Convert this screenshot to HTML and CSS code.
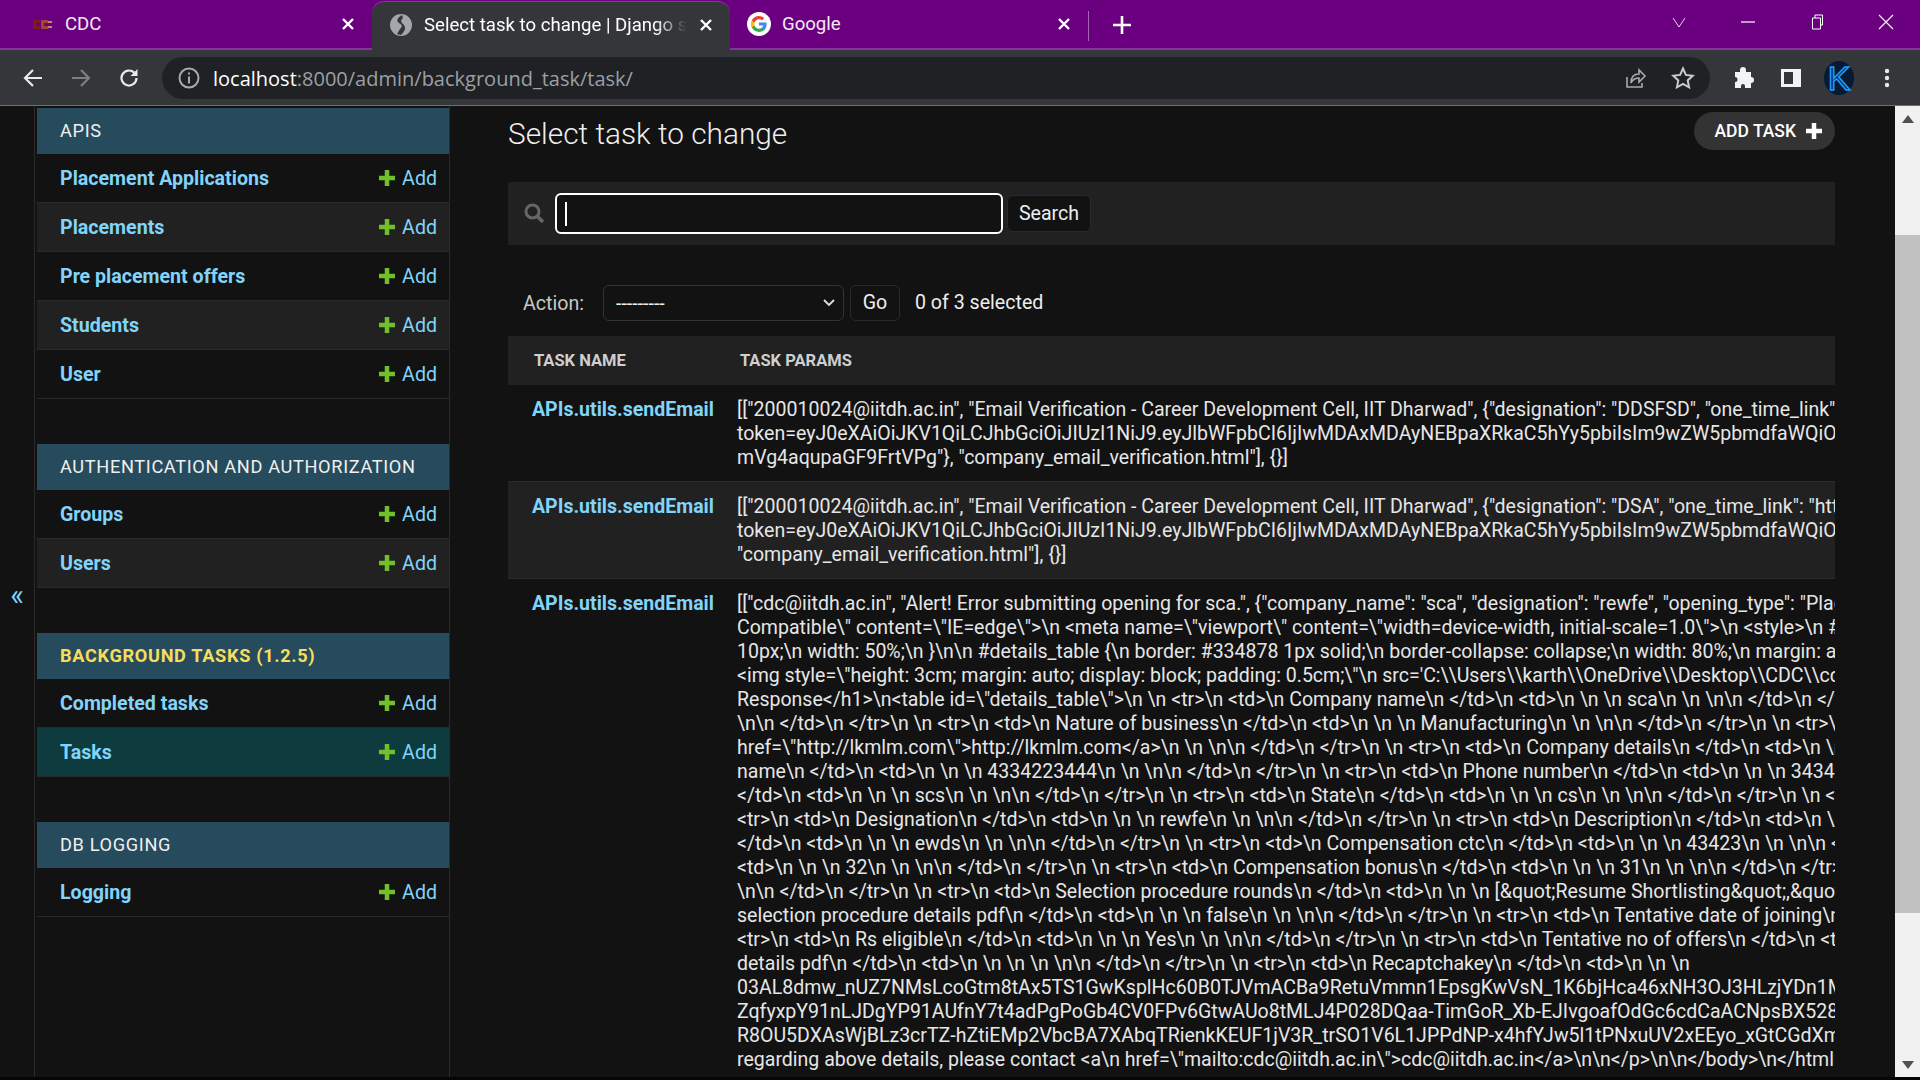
FILE: index.html
```html
<!DOCTYPE html>
<html>
	<head>
		<title>Select task to change | Django site admin</title>
		<meta charset="utf-8">
		<link rel="stylesheet" href="styles.css">
	</head>
	<body>
		<div class="tabstrip">
			<div class="tab tab-first">
				<svg class="fav" viewBox="0 0 24 24"><path d="M3 8h7v3H6v3h4v3H3z" fill="#7d1d14"/><path d="M11 8h7v3h-4v3h4v3h-7z" fill="#a5452f"/><path d="M18 9h4v2h-4zM18 14h4v2h-4z" fill="#c08a5a"/></svg>
				<span class="tab-title">CDC</span>
				<svg class="tab-close" viewBox="0 0 16 16"><path d="M3 3l10 10M13 3L3 13" stroke="#fff" stroke-width="2.4"/></svg>
			</div>
			<div class="tab tab-active">
				<svg class="fav" viewBox="0 0 24 24"><circle cx="12" cy="12" r="11" fill="#a3a6aa"/><path d="M13 2c-5 3-6 6-3 8s4 3 1 6l-3 5 4 1c4-4 5-7 3-10-3-3-4-4-1-7z" fill="#35363a"/></svg>
				<span class="tab-title tab-fade">Select task to change | Django site admin</span>
				<svg class="tab-close" viewBox="0 0 16 16"><path d="M3 3l10 10M13 3L3 13" stroke="#fff" stroke-width="2.4"/></svg>
			</div>
			<div class="tab">
				<svg class="fav" viewBox="0 0 24 24"><circle cx="12" cy="12" r="12" fill="#fff"/><path d="M19.6 12.2c0-.6 0-1.100-.2-1.600H12v3h4.300c-.2 1-.8 1.800-1.600 2.400v2h2.600c1.500-1.400 2.300-3.400 2.300-5.800z" fill="#4285f4"/><path d="M12 20c2.200 0 4-.7 5.300-2l-2.600-2c-.7.500-1.600.8-2.700.8-2.100 0-3.900-1.400-4.500-3.300H4.800v2.100C6.100 18.200 8.900 20 12 20z" fill="#34a853"/><path d="M7.500 13.500c-.3-1-.3-2 0-3V8.400H4.800c-1.100 2.200-1.100 5 0 7.200z" fill="#fbbc05"/><path d="M12 7.200c1.200 0 2.200.4 3 1.200l2.300-2.300C15.900 4.800 14.100 4 12 4 8.900 4 6.100 5.800 4.800 8.400l2.700 2.100c.6-1.900 2.400-3.300 4.500-3.300z" fill="#ea4335"/></svg>
				<span class="tab-title">Google</span>
				<svg class="tab-close" viewBox="0 0 16 16"><path d="M3 3l10 10M13 3L3 13" stroke="#fff" stroke-width="2.4"/></svg>
			</div>
			<div class="tab-sep"></div>
			<svg class="new-tab" viewBox="0 0 18 18"><path d="M9 0v18M0 9h18" stroke="#fff" stroke-width="2.600"/></svg>
			<div class="win-controls">
				<div class="win-btn"><svg viewBox="0 0 16 16"><path d="M2 4l6 9 6-9" stroke="#e5d3ea" fill="none"/></svg></div>
				<div class="win-btn"><svg viewBox="0 0 16 16"><path d="M1 8h14" stroke="#fff" stroke-width="1.200"/></svg></div>
				<div class="win-btn"><svg viewBox="0 0 16 16"><path d="M3.500 4h8v11h-8zM6 4V1h7.500v10h-2" stroke="#fff" fill="none"/></svg></div>
				<div class="win-btn"><svg viewBox="0 0 16 16"><path d="M1 1l14 14M15 1L1 15" stroke="#fff" stroke-width="1.100"/></svg></div>
			</div>
		</div>

		<div class="toolbar">
			<div class="tool-btn"><svg viewBox="0 0 24 24"><path d="M21 12H5M12 4l-8 8 8 8" stroke="#e8eaed" stroke-width="2.200" fill="none"/></svg></div>
			<div class="tool-btn"><svg viewBox="0 0 24 24"><path d="M3 12h16M12 4l8 8-8 8" stroke="#7c7f83" stroke-width="2.200" fill="none"/></svg></div>
			<div class="tool-btn"><svg viewBox="0 0 24 24"><path d="M19.500 12a7.500 7.500 0 1 1-2.300-5.400" stroke="#e8eaed" stroke-width="2.200" fill="none"/><path d="M20.500 3v7h-7z" fill="#e8eaed"/></svg></div>
			<div class="omnibox">
				<svg class="omni-icon" viewBox="0 0 24 24"><circle cx="12" cy="12" r="9.500" stroke="#a9abae" stroke-width="2" fill="none"/><path d="M12 10.500v7M12 6.500v2" stroke="#a9abae" stroke-width="2"/></svg>
				<div class="url"><span class="url-host">localhost</span>:8000/admin/background_task/task/</div>
				<svg class="omni-icon" viewBox="0 0 24 24"><path d="M4 11v10h15v-4" stroke="#a9abae" stroke-width="1.600" fill="none"/><path d="M8 17c0-6 3-9 8-9V4l6 6-6 6v-4c-4 0-6 1-8 5z" stroke="#a9abae" stroke-width="1.600" fill="none"/></svg>
				<svg class="omni-icon" viewBox="0 0 24 24"><path d="M12 2.500l2.900 6.400 6.900.8-5.100 4.700 1.400 6.900-6.100-3.500-6.100 3.500 1.400-6.900-5.100-4.700 6.900-.8z" stroke="#c8cacd" stroke-width="2" fill="none"/></svg>
			</div>
			<div class="tool-btn"><svg viewBox="0 0 24 24"><path d="M9 4a3 3 0 0 1 6 0v2h5v5a3 3 0 0 1 0 6v5h-6v-2a2 2 0 0 0-4 0v2H4v-6a2.500 2.500 0 0 0 0-5V6h5z" fill="#f1f3f4"/></svg></div>
			<div class="tool-btn"><svg viewBox="0 0 24 24"><path d="M2 3h20v18H2zM5 6v12h9V6z" fill="#f1f3f4" fill-rule="evenodd"/></svg></div>
			<div class="tool-btn"><span class="avatar">K</span></div>
			<div class="tool-btn"><svg viewBox="0 0 24 24"><circle cx="12" cy="5" r="2.200" fill="#e8eaed"/><circle cx="12" cy="12" r="2.200" fill="#e8eaed"/><circle cx="12" cy="19" r="2.200" fill="#e8eaed"/></svg></div>
		</div>

		<div class="page">
			<div class="nav-toggle">«</div>
			<div class="sidebar">
				<div class="module">
					<div class="caption">APIS</div>
					<div class="nav-row"><a class="model-link">Placement Applications</a><a class="add-link"><svg class="plus" viewBox="0 0 16 16"><path d="M8 0v16M0 8h16" stroke="#70bf2b" stroke-width="4.500"/></svg>Add</a></div>
					<div class="nav-row alt"><a class="model-link">Placements</a><a class="add-link"><svg class="plus" viewBox="0 0 16 16"><path d="M8 0v16M0 8h16" stroke="#70bf2b" stroke-width="4.500"/></svg>Add</a></div>
					<div class="nav-row"><a class="model-link">Pre placement offers</a><a class="add-link"><svg class="plus" viewBox="0 0 16 16"><path d="M8 0v16M0 8h16" stroke="#70bf2b" stroke-width="4.500"/></svg>Add</a></div>
					<div class="nav-row alt"><a class="model-link">Students</a><a class="add-link"><svg class="plus" viewBox="0 0 16 16"><path d="M8 0v16M0 8h16" stroke="#70bf2b" stroke-width="4.500"/></svg>Add</a></div>
					<div class="nav-row"><a class="model-link">User</a><a class="add-link"><svg class="plus" viewBox="0 0 16 16"><path d="M8 0v16M0 8h16" stroke="#70bf2b" stroke-width="4.500"/></svg>Add</a></div>
				</div>
				<div class="module">
					<div class="caption">AUTHENTICATION AND AUTHORIZATION</div>
					<div class="nav-row"><a class="model-link">Groups</a><a class="add-link"><svg class="plus" viewBox="0 0 16 16"><path d="M8 0v16M0 8h16" stroke="#70bf2b" stroke-width="4.500"/></svg>Add</a></div>
					<div class="nav-row alt"><a class="model-link">Users</a><a class="add-link"><svg class="plus" viewBox="0 0 16 16"><path d="M8 0v16M0 8h16" stroke="#70bf2b" stroke-width="4.500"/></svg>Add</a></div>
				</div>
				<div class="module">
					<div class="caption caption-current">BACKGROUND TASKS (1.2.5)</div>
					<div class="nav-row"><a class="model-link">Completed tasks</a><a class="add-link"><svg class="plus" viewBox="0 0 16 16"><path d="M8 0v16M0 8h16" stroke="#70bf2b" stroke-width="4.500"/></svg>Add</a></div>
					<div class="nav-row current"><a class="model-link">Tasks</a><a class="add-link"><svg class="plus" viewBox="0 0 16 16"><path d="M8 0v16M0 8h16" stroke="#70bf2b" stroke-width="4.500"/></svg>Add</a></div>
				</div>
				<div class="module">
					<div class="caption">DB LOGGING</div>
					<div class="nav-row"><a class="model-link">Logging</a><a class="add-link"><svg class="plus" viewBox="0 0 16 16"><path d="M8 0v16M0 8h16" stroke="#70bf2b" stroke-width="4.500"/></svg>Add</a></div>
				</div>
			</div>

			<div class="content">
				<div class="content-head">
					<h1 class="page-title">Select task to change</h1>
					<a class="add-task">ADD TASK<svg viewBox="0 0 16 16"><path d="M8 0v16M0 8h16" stroke="#fff" stroke-width="4.500"/></svg></a>
				</div>
				<div class="search-bar">
					<svg class="search-icon" viewBox="0 0 21 21"><circle cx="8.500" cy="8.500" r="6.500" stroke="#666" stroke-width="3" fill="none"/><path d="M13 13l6 6" stroke="#666" stroke-width="3.500"/></svg>
					<div class="search-input"><span class="caret"></span></div>
					<div class="btn btn-search">Search</div>
				</div>
				<div class="actions">
					<span class="action-label">Action:</span>
					<div class="action-select">---------<svg viewBox="0 0 12 8"><path d="M1 1l5 5 5-5" stroke="#e0e0e0" stroke-width="1.800" fill="none"/></svg></div>
					<div class="btn btn-go">Go</div>
					<span class="action-count">0 of 3 selected</span>
				</div>
				<table class="results">
					<thead>
						<tr><th class="col-name">TASK NAME</th><th>TASK PARAMS</th></tr>
					</thead>
					<tbody>
						<tr>
							<td><a class="task-link">APIs.utils.sendEmail</a></td>
							<td>[["200010024@iitdh.ac.in", "Email Verification - Career Development Cell, IIT Dharwad", {"designation": "DDSFSD", "one_time_link": "http://<br>token=eyJ0eXAiOiJKV1QiLCJhbGciOiJIUzI1NiJ9.eyJlbWFpbCI6IjIwMDAxMDAyNEBpaXRkaC5hYy5pbiIsIm9wZW5pbmdfaWQiOiJ<br>mVg4aqupaGF9FrtVPg"}, "company_email_verification.html"], {}]</td>
						</tr>
						<tr class="alt">
							<td><a class="task-link">APIs.utils.sendEmail</a></td>
							<td>[["200010024@iitdh.ac.in", "Email Verification - Career Development Cell, IIT Dharwad", {"designation": "DSA", "one_time_link": "http://localhost<br>token=eyJ0eXAiOiJKV1QiLCJhbGciOiJIUzI1NiJ9.eyJlbWFpbCI6IjIwMDAxMDAyNEBpaXRkaC5hYy5pbiIsIm9wZW5pbmdfaWQiOiJ<br>"company_email_verification.html"], {}]</td>
						</tr>
						<tr>
							<td><a class="task-link">APIs.utils.sendEmail</a></td>
							<td>[["cdc@iitdh.ac.in", "Alert! Error submitting opening for sca.", {"company_name": "sca", "designation": "rewfe", "opening_type": "Placement", "x<br>Compatible\" content=\"IE=edge\"&gt;\n &lt;meta name=\"viewport\" content=\"width=device-width, initial-scale=1.0\"&gt;\n &lt;style&gt;\n #main {\n<br>10px;\n width: 50%;\n }\n\n #details_table {\n border: #334878 1px solid;\n border-collapse: collapse;\n width: 80%;\n margin: auto;\n<br>&lt;img style=\"height: 3cm; margin: auto; display: block; padding: 0.5cm;\"\n src='C:\\Users\\karth\\OneDrive\\Desktop\\CDC\\cdc<br>Response&lt;/h1&gt;\n&lt;table id=\"details_table\"&gt;\n \n &lt;tr&gt;\n &lt;td&gt;\n Company name\n &lt;/td&gt;\n &lt;td&gt;\n \n \n sca\n \n \n\n &lt;/td&gt;\n &lt;/tr&gt;<br>\n\n &lt;/td&gt;\n &lt;/tr&gt;\n \n &lt;tr&gt;\n &lt;td&gt;\n Nature of business\n &lt;/td&gt;\n &lt;td&gt;\n \n \n Manufacturing\n \n \n\n &lt;/td&gt;\n &lt;/tr&gt;\n \n &lt;tr&gt;\n<br>href=\"http://lkmlm.com\"&gt;http://lkmlm.com&lt;/a&gt;\n \n \n\n &lt;/td&gt;\n &lt;/tr&gt;\n \n &lt;tr&gt;\n &lt;td&gt;\n Company details\n &lt;/td&gt;\n &lt;td&gt;\n \n<br>name\n &lt;/td&gt;\n &lt;td&gt;\n \n \n 4334223444\n \n \n\n &lt;/td&gt;\n &lt;/tr&gt;\n \n &lt;tr&gt;\n &lt;td&gt;\n Phone number\n &lt;/td&gt;\n &lt;td&gt;\n \n \n 34343<br>&lt;/td&gt;\n &lt;td&gt;\n \n \n scs\n \n \n\n &lt;/td&gt;\n &lt;/tr&gt;\n \n &lt;tr&gt;\n &lt;td&gt;\n State\n &lt;/td&gt;\n &lt;td&gt;\n \n \n cs\n \n \n\n &lt;/td&gt;\n &lt;/tr&gt;\n \n &lt;tr&gt;<br>&lt;tr&gt;\n &lt;td&gt;\n Designation\n &lt;/td&gt;\n &lt;td&gt;\n \n \n rewfe\n \n \n\n &lt;/td&gt;\n &lt;/tr&gt;\n \n &lt;tr&gt;\n &lt;td&gt;\n Description\n &lt;/td&gt;\n &lt;td&gt;\n \n<br>&lt;/td&gt;\n &lt;td&gt;\n \n \n ewds\n \n \n\n &lt;/td&gt;\n &lt;/tr&gt;\n \n &lt;tr&gt;\n &lt;td&gt;\n Compensation ctc\n &lt;/td&gt;\n &lt;td&gt;\n \n \n 43423\n \n \n\n &lt;/td&gt;<br>&lt;td&gt;\n \n \n 32\n \n \n\n &lt;/td&gt;\n &lt;/tr&gt;\n \n &lt;tr&gt;\n &lt;td&gt;\n Compensation bonus\n &lt;/td&gt;\n &lt;td&gt;\n \n \n 31\n \n \n\n &lt;/td&gt;\n &lt;/tr&gt;<br>\n\n &lt;/td&gt;\n &lt;/tr&gt;\n \n &lt;tr&gt;\n &lt;td&gt;\n Selection procedure rounds\n &lt;/td&gt;\n &lt;td&gt;\n \n \n [&amp;quot;Resume Shortlisting&amp;quot;,&amp;quot;Test<br>selection procedure details pdf\n &lt;/td&gt;\n &lt;td&gt;\n \n \n false\n \n \n\n &lt;/td&gt;\n &lt;/tr&gt;\n \n &lt;tr&gt;\n &lt;td&gt;\n Tentative date of joining\n<br>&lt;tr&gt;\n &lt;td&gt;\n Rs eligible\n &lt;/td&gt;\n &lt;td&gt;\n \n \n Yes\n \n \n\n &lt;/td&gt;\n &lt;/tr&gt;\n \n &lt;tr&gt;\n &lt;td&gt;\n Tentative no of offers\n &lt;/td&gt;\n &lt;td&gt;\n<br>details pdf\n &lt;/td&gt;\n &lt;td&gt;\n \n \n \n \n\n &lt;/td&gt;\n &lt;/tr&gt;\n \n &lt;tr&gt;\n &lt;td&gt;\n Recaptchakey\n &lt;/td&gt;\n &lt;td&gt;\n \n \n<br>03AL8dmw_nUZ7NMsLcoGtm8tAx5TS1GwKsplHc60B0TJVmACBa9RetuVmmn1EpsgKwVsN_1K6bjHca46xNH3OJ3HLzjYDn1Mw<br>ZqfyxpY91nLJDgYP91AUfnY7t4adPgPoGb4CV0FPv6GtwAUo8tMLJ4P028DQaa-TimGoR_Xb-EJIvgoafOdGc6cdCaACNpsBX528a<br>R8OU5DXAsWjBLz3crTZ-hZtiEMp2VbcBA7XAbqTRienkKEUF1jV3R_trSO1V6L1JPPdNP-x4hfYJw5l1tPNxuUV2xEEyo_xGtCGdXm0<br>regarding above details, please contact &lt;a\n href=\"mailto:cdc@iitdh.ac.in\"&gt;cdc@iitdh.ac.in&lt;/a&gt;\n\n&lt;/p&gt;\n\n&lt;/body&gt;\n&lt;/html&gt;"</td>
						</tr>
					</tbody>
				</table>
			</div>

			<div class="scrollbar">
				<div class="scroll-arrow"><svg viewBox="0 0 12 8"><path d="M6 0l6 8H0z" fill="#505050"/></svg></div>
				<div class="scroll-thumb"></div>
				<div class="scroll-arrow scroll-arrow-down"><svg viewBox="0 0 12 8"><path d="M0 0h12L6 8z" fill="#505050"/></svg></div>
			</div>
		</div>
		<div class="screen-edge"></div>
	</body>
</html>
```

FILE: styles.css
```css
html, body {
	margin: 0;
	height: 100%;
	overflow: hidden;
}
body {
	display: flex;
	flex-direction: column;
	background-color: #121212;
	font-family: Roboto, "Liberation Sans", sans-serif;
	color: #eeeeee;
}
a {
	text-decoration: none;
}

/* browser chrome */
.tabstrip {
	display: flex;
	flex: none;
	height: 50px;
	box-sizing: border-box;
	background-color: #6a007f;
	border-bottom: 2px solid #8a32a0;
}
.tab {
	display: flex;
	flex: none;
	align-items: center;
	gap: 11px;
	width: 358px;
	height: 48px;
	box-sizing: border-box;
	padding: 0 16px 0 17px;
	font-size: 18.6px;
	color: #f4eaf6;
}
.tab-first {
	width: 372px;
	padding-left: 30px;
}
.tab-active {
	height: 48px;
	margin-top: 2px;
	padding-bottom: 3px;
	background-color: #35363a;
	border-radius: 12px 12px 0 0;
	box-shadow: 0 -1px 0 #8a32a0;
	color: #ffffff;
}
.fav {
	flex: none;
	width: 24px;
	height: 24px;
}
.tab-title {
	flex: 1;
	min-width: 0;
	white-space: nowrap;
	overflow: hidden;
}
.tab-fade {
	-webkit-mask-image: linear-gradient(to right, #000 88%, transparent);
	mask-image: linear-gradient(to right, #000 88%, transparent);
}
.tab-close {
	flex: none;
	width: 16px;
	height: 16px;
}
.tab-sep {
	flex: none;
	width: 1px;
	height: 30px;
	margin-top: 11px;
	background-color: #a565b5;
}
.new-tab {
	flex: none;
	width: 18px;
	height: 18px;
	margin: 16px 0 0 24px;
}
.win-controls {
	display: flex;
	margin-left: auto;
}
.win-btn {
	display: flex;
	align-items: center;
	justify-content: center;
	width: 69px;
	height: 44px;
}
.win-btn svg {
	width: 16px;
	height: 16px;
}
.toolbar {
	display: flex;
	flex: none;
	align-items: center;
	height: 54px;
	padding: 1px 9px 0;
	background-color: #35363a;
	border-bottom: 1px solid #6d6e72;
}
.tool-btn {
	display: flex;
	flex: none;
	align-items: center;
	justify-content: center;
	width: 48px;
	height: 48px;
}
.tool-btn svg {
	width: 24px;
	height: 24px;
}
.omnibox {
	display: flex;
	flex: 1;
	align-items: center;
	gap: 24px;
	height: 42px;
	margin: 0 9px;
	padding: 0 15px;
	background-color: #202124;
	border-radius: 21px;
}
.omni-icon {
	flex: none;
	width: 24px;
	height: 24px;
}
.url {
	flex: 1;
	margin-left: -12px;
	font-family: "Open Sans", "Noto Sans", sans-serif;
	font-size: 20px;
	color: #9aa0a6;
	white-space: nowrap;
}
.url-host {
	color: #ffffff;
}
.avatar {
	width: 30px;
	height: 34px;
	border-radius: 50%;
	background-color: #071a33;
	font-family: "Liberation Sans", sans-serif;
	font-size: 34px;
	line-height: 34px;
	text-align: center;
	color: #0a2a55;
	-webkit-text-stroke: 1.5px #1f9bff;
}

/* admin page */
.page {
	display: flex;
	flex: 1;
	min-height: 0;
	background-color: #121212;
}
.nav-toggle {
	display: flex;
	flex: none;
	align-items: center;
	justify-content: center;
	width: 34px;
	border-right: 1px solid #2a2a2a;
	padding-top: 6px;
	box-sizing: content-box;
	font-size: 29px;
	color: #81d4fa;
}
.sidebar {
	flex: none;
	width: 412px;
	padding-left: 2px;
	padding-top: 2px;
	border-right: 1px solid #2a2a2a;
	font-size: 19.6px;
}
.module {
	margin-bottom: 45px;
}
.caption {
	height: 46px;
	box-sizing: border-box;
	padding-left: 23px;
	background-color: #264b5d;
	font-size: 18.2px;
	line-height: 45px;
	letter-spacing: 0.65px;
	color: #f0f0f0;
}
.caption-current {
	font-weight: 700;
	color: #f5dd5d;
}
.nav-row {
	display: flex;
	align-items: center;
	justify-content: space-between;
	height: 49px;
	box-sizing: border-box;
	padding: 0 12px 0 23px;
	border-bottom: 1px solid #2a2a2a;
}
.nav-row.alt {
	background-color: #212121;
}
.nav-row.current {
	background-color: #0d3b3e;
}
.model-link {
	font-weight: 700;
	color: #81d4fa;
}
.add-link {
	display: flex;
	align-items: center;
	gap: 7px;
	color: #81d4fa;
}
.plus {
	width: 16px;
	height: 16px;
}
.content {
	flex: 1;
	min-width: 0;
	padding: 0 60px 0 58px;
}
.content-head {
	display: flex;
	justify-content: space-between;
	height: 76px;
}
.page-title {
	margin: 9px 0 0 0;
	font-size: 29.8px;
	font-weight: 300;
	line-height: 38px;
	color: #eeeeee;
}
.add-task {
	display: flex;
	align-items: center;
	gap: 10px;
	height: 38px;
	margin-top: 6px;
	padding: 0 13px 0 20px;
	background-color: #333333;
	border-radius: 20px;
	font-size: 17.5px;
	font-weight: 500;
	color: #ffffff;
}
.add-task svg {
	width: 16px;
	height: 16px;
}
.search-bar {
	display: flex;
	align-items: center;
	height: 63px;
	padding-left: 16px;
	background-color: #212121;
}
.search-icon {
	flex: none;
	width: 21px;
	height: 21px;
	margin-right: 10px;
}
.search-input {
	display: flex;
	align-items: center;
	width: 448px;
	height: 41px;
	box-sizing: border-box;
	padding-left: 8px;
	background-color: #121212;
	border: 2px solid #ffffff;
	border-radius: 6px;
}
.caret {
	width: 2px;
	height: 24px;
	background-color: #ffffff;
}
.btn {
	display: flex;
	align-items: center;
	justify-content: center;
	box-sizing: border-box;
	background-color: #121212;
	border: 1px solid #2a2a2a;
	border-radius: 6px;
	font-size: 19.6px;
	color: #eeeeee;
}
.btn-search {
	width: 84px;
	height: 37px;
	margin-left: 4px;
}
.actions {
	display: flex;
	align-items: center;
	height: 36px;
	margin: 40px 0 15px;
	padding-left: 15px;
	font-size: 19.6px;
}
.action-label {
	width: 80px;
	color: #c8c8c8;
}
.action-select {
	display: flex;
	align-items: center;
	justify-content: space-between;
	width: 241px;
	height: 36px;
	box-sizing: border-box;
	padding: 0 8px 0 12px;
	border: 1px solid #333333;
	border-radius: 6px;
}
.action-select svg {
	width: 12px;
	height: 8px;
}
.btn-go {
	width: 50px;
	height: 36px;
	margin-left: 6px;
	padding-bottom: 1px;
}
.action-count {
	margin-left: 15px;
	padding-bottom: 2px;
}
.results {
	width: 100%;
	table-layout: fixed;
	border-collapse: collapse;
	font-size: 19.55px;
	line-height: 24px;
}
.results th {
	height: 49px;
	box-sizing: border-box;
	padding: 1px 0 0 7px;
	background-color: #212121;
	font-size: 16.5px;
	font-weight: 700;
	text-align: left;
	color: #cfcfcf;
}
.results th.col-name {
	width: 225px;
	padding-left: 26px;
}
.results td {
	padding: 13px 0 11px 4px;
	border-bottom: 1px solid #2a2a2a;
	vertical-align: top;
	white-space: nowrap;
	overflow: hidden;
	color: #e6e6e6;
}
.results td:first-child {
	padding-left: 24px;
}
.results tr.alt td {
	background-color: #212121;
}
.task-link {
	font-weight: 700;
	color: #81d4fa;
}
.scrollbar {
	display: flex;
	flex: none;
	flex-direction: column;
	width: 25px;
	background-color: #f1f1f1;
}
.scroll-arrow {
	display: flex;
	flex: none;
	align-items: center;
	justify-content: center;
	height: 25px;
}
.scroll-arrow svg {
	width: 12px;
	height: 8px;
}
.scroll-arrow-down {
	margin-top: auto;
}
.scroll-thumb {
	height: 678px;
	margin-top: 104px;
	background-color: #c1c1c1;
}
.screen-edge {
	flex: none;
	height: 3px;
	background-color: #050505;
}
```
